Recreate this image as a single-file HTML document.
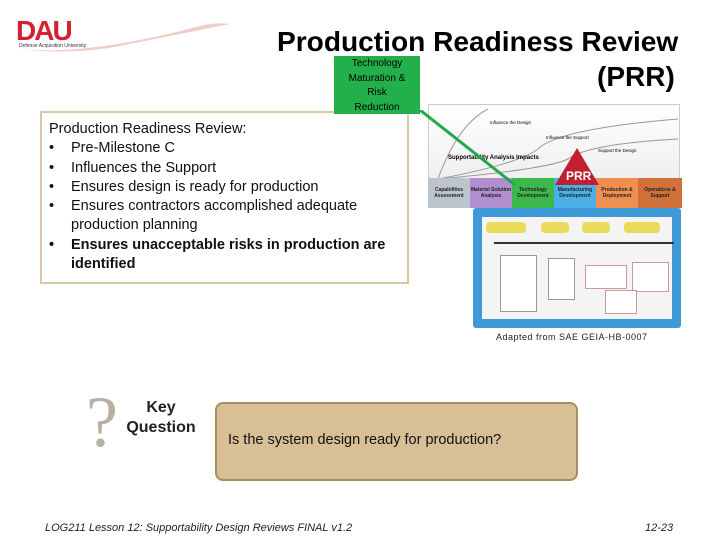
<!DOCTYPE html>
<html><head><style>
body{margin:0;width:720px;height:540px;background:#fff;position:relative;font-family:"Liberation Sans",sans-serif;overflow:hidden}
.a{position:absolute}
.ph{position:absolute;top:178px;height:30px;font-size:5px;font-weight:bold;color:#222;text-align:center;display:flex;align-items:center;justify-content:center;line-height:6px}
.y{position:absolute;background:#e8dc5a;border-radius:4px;height:11px;font-size:3.5px;text-align:center;color:#333}
.li{position:relative;padding-left:22px;width:318px}
.li:before{content:"•";position:absolute;left:0}
</style></head><body>
<svg class="a" style="left:0;top:0" width="240" height="70">
<path d="M8 48 Q80 58 200 26 Q215 22 230 24 Q200 30 120 46 Q70 56 8 48Z" fill="#e8b8b0" opacity=".7"/>
<text x="16" y="40" font-family="Liberation Sans" font-weight="bold" font-size="28" fill="#d42030" letter-spacing="-2">DAU</text>
<text x="19" y="47" font-family="Liberation Sans" font-size="5" fill="#333">Defense Acquisition University</text>
</svg>
<div class="a" style="left:277px;top:26px;font-size:28.1px;font-weight:bold;color:#000;white-space:nowrap">Production Readiness Review</div>
<div class="a" style="left:597px;top:61px;font-size:28px;font-weight:bold">(PRR)</div>
<div class="a" style="left:40px;top:111px;width:369px;height:173px;border:2px solid #d9c8a2;box-sizing:border-box"></div>
<div class="a" style="left:334px;top:56px;width:86px;height:58px;background:#22b04a;font-size:10px;text-align:center;line-height:14.5px;color:#000;padding-top:1px;box-sizing:border-box">Technology<br>Maturation &amp;<br>Risk<br>Reduction</div>
<div class="a" style="left:49px;top:120px;font-size:14.5px;line-height:19.3px;color:#111">
Production Readiness Review:
<div class="li">Pre-Milestone C</div>
<div class="li">Influences the Support</div>
<div class="li">Ensures design is ready for production</div>
<div class="li">Ensures contractors accomplished adequate production planning</div>
<div class="li" style="font-weight:bold">Ensures unacceptable risks in production are identified</div>
</div>
<div class="a" style="left:428px;top:104px;width:252px;height:80px;background:linear-gradient(#fff,#eee);border:1px solid #ccc;box-sizing:border-box"></div>
<svg class="a" style="left:428px;top:104px" width="252" height="80">
<path d="M10 75 Q30 20 60 5" stroke="#999" fill="none"/><path d="M10 75 Q90 60 110 45 Q130 25 250 15" stroke="#999" fill="none"/>
<path d="M10 75 Q120 65 140 55 Q160 40 250 35" stroke="#999" fill="none"/>
<text x="20" y="55" font-size="6" font-weight="bold" font-family="Liberation Sans">Supportability Analysis Impacts</text>
<text x="62" y="20" font-size="4.5" font-family="Liberation Sans">Influence the Design</text>
<text x="118" y="35" font-size="4.5" font-family="Liberation Sans">Influence the Support</text>
<text x="170" y="48" font-size="4.5" font-family="Liberation Sans">Support the Design</text>
</svg>
<div class="ph" style="left:428px;width:42px;background:#bcc4cc">Capabilities Assessment</div>
<div class="ph" style="left:470px;width:42px;background:#b08ed0">Materiel Solution Analysis</div>
<div class="ph" style="left:512px;width:42px;background:#3cb84a">Technology Development</div>
<div class="ph" style="left:554px;width:42px;background:#4cb0e8">Manufacturing Development</div>
<div class="ph" style="left:596px;width:42px;background:#f09050">Production &amp; Deployment</div>
<div class="ph" style="left:638px;width:44px;background:#d0703a">Operations &amp; Support</div>
<svg class="a" style="left:420px;top:110px" width="180" height="80">
<line x1="0" y1="0" x2="95" y2="75" stroke="#22a84a" stroke-width="3"/>
<polygon points="157,38 135,75 179,75" fill="#c02030"/>
<text x="146" y="70" font-size="12" font-weight="bold" fill="#fff" font-family="Liberation Sans">PRR</text>
</svg>
<div class="a" style="left:473px;top:208px;width:208px;height:120px;background:#3e9ad6;border-radius:3px"></div>
<div class="a" style="left:482px;top:217px;width:190px;height:102px;background:#f4f4f4"></div>
<div class="y" style="left:486px;top:222px;width:40px"></div>
<div class="y" style="left:541px;top:222px;width:28px"></div>
<div class="y" style="left:582px;top:222px;width:28px"></div>
<div class="y" style="left:624px;top:222px;width:36px"></div>
<div class="a" style="left:494px;top:242px;width:180px;height:2px;background:#333"></div>
<div class="a" style="left:500px;top:255px;width:35px;height:55px;background:#fff;border:1px solid #999"></div>
<div class="a" style="left:548px;top:258px;width:25px;height:40px;background:#fff;border:1px solid #999"></div>
<div class="a" style="left:585px;top:265px;width:40px;height:22px;background:#fff;border:1px solid #c99"></div>
<div class="a" style="left:632px;top:262px;width:35px;height:28px;background:#fff;border:1px solid #c99"></div>
<div class="a" style="left:605px;top:290px;width:30px;height:22px;background:#fff;border:1px solid #c99"></div>
<div class="a" style="left:496px;top:332px;font-size:9px;letter-spacing:.5px;color:#222">Adapted from SAE GEIA-HB-0007</div>
<div class="a" style="left:86px;top:382px;font-size:72px;color:#b8b0a0;font-family:'Liberation Serif',serif;line-height:80px">?</div>
<div class="a" style="left:116px;top:398px;width:90px;text-align:center;font-size:16px;font-weight:bold;line-height:20px;color:#222">Key<br>Question</div>
<div class="a" style="left:215px;top:402px;width:363px;height:79px;background:#d8bf96;border:2px solid #a88e64;border-radius:8px;box-sizing:border-box"></div>
<div class="a" style="left:228px;top:432px;font-size:14.5px;color:#111">Is the system design ready for production?</div>
<div class="a" style="left:45px;top:522px;font-size:11px;font-style:italic;color:#222">LOG211 Lesson 12: Supportability Design Reviews  FINAL v1.2</div>
<div class="a" style="left:645px;top:522px;font-size:11px;font-style:italic;color:#222">12-23</div>
</body></html>
